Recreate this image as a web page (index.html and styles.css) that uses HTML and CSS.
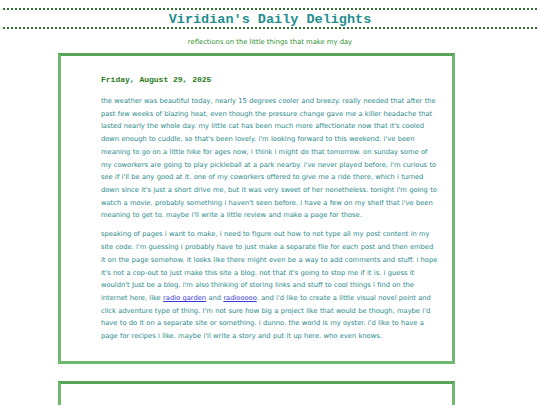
FILE: index.html
```html
<!DOCTYPE html>
<html>
<head>
<meta charset="utf-8">
<title>Viridian's Daily Delights</title>
<link rel="stylesheet" href="styles.css">
</head>
<body>
<header class="site-header">
  <h1 class="site-title">Viridian's Daily Delights</h1>
</header>
<p class="tagline">reflections on the little things that make my day</p>
<main class="posts">
  <article class="post">
    <h2 class="post-date">Friday, August 29, 2025</h2>
    <p>the weather was beautiful today, nearly 15 degrees cooler and breezy. really needed that after the past few weeks of blazing heat, even though the pressure change gave me a killer headache that lasted nearly the whole day. my little cat has been much more affectionate now that it's cooled down enough to cuddle, so that's been lovely. i'm looking forward to this weekend. i've been meaning to go on a little hike for ages now, i think i might do that tomorrow. on sunday some of my coworkers are going to play pickleball at a park nearby. i've never played before, i'm curious to see if i'll be any good at it. one of my coworkers offered to give me a ride there, which i turned down since it's just a short drive me, but it was very sweet of her nonetheless. tonight i'm going to watch a movie, probably something i haven't seen before. i have a few on my shelf that i've been meaning to get to. maybe i'll write a little review and make a page for those.</p>
    <p>speaking of pages i want to make, i need to figure out how to not type all my post content in my site code. i'm guessing i probably have to just make a separate file for each post and then embed it on the page somehow. it looks like there might even be a way to add comments and stuff. i hope it's not a cop-out to just make this site a blog. not that it's going to stop me if it is. i guess it wouldn't Just be a blog. i'm also thinking of storing links and stuff to cool things i find on the internet here, like <a href="#">radio garden</a> and <a href="#">radiooooo</a>. and i'd like to create a little visual novel point and click adventure type of thing. I'm not sure how big a project like that would be though, maybe i'd have to do it on a separate site or something. i dunno. the world is my oyster. i'd like to have a page for recipes i like. maybe i'll write a story and put it up here. who even knows.</p>
  </article>
  <article class="post"></article>
</main>
</body>
</html>
```
FILE: styles.css
```css
html, body {
  margin: 0;
  padding: 0;
  background: #ffffff;
}
body {
  padding: 8px 3px 0;
  font-family: "DejaVu Sans", Verdana, sans-serif;
}
.site-header {
  border-top: 2px dotted #2f6f2f;
  border-bottom: 2px dotted #2f6f2f;
  text-align: center;
}
.site-title {
  margin: 0;
  padding-top: 2px;
  font-family: "Liberation Mono", "Courier New", monospace;
  font-size: 13.5px;
  font-weight: bold;
  line-height: 15px;
  color: #1f8f8f;
}
.tagline {
  margin: 9px 0 6px;
  text-align: center;
  font-size: 6.8px;
  line-height: 9px;
  color: #2f8f2f;
}
.posts {
  display: flex;
  flex-direction: column;
  align-items: flex-start;
  gap: 17px;
  padding-left: 55px;
}
.post {
  box-sizing: border-box;
  width: 397px;
  min-height: 40px;
  border: 3px solid #70b870;
  border-top-color: #58a458;
  padding: 19px 13px 12px 40px;
  background: #fff;
}
.post-date {
  margin: 0 0 10px;
  font-family: "Liberation Mono", "Courier New", monospace;
  font-size: 8px;
  line-height: 10px;
  font-weight: bold;
  color: #2a7a1a;
}
.post p {
  margin: 0 0 6.4px;
  font-size: 6.75px;
  line-height: 12.7px;
  letter-spacing: -0.033px;
  word-spacing: 0.23px;
  color: #2a8a8a;
}
.post a {
  color: #3a3ad0;
}
```
